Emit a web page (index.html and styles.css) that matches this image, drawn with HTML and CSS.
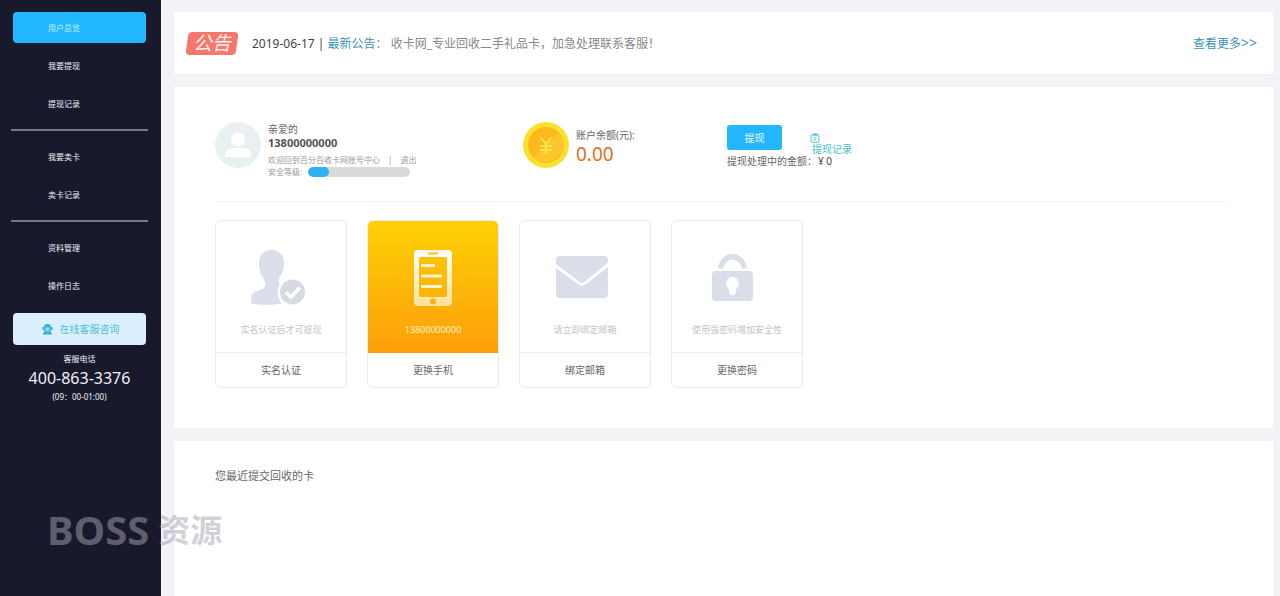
FILE: index.html
```html
<!DOCTYPE html>
<html lang="zh-CN">
<head>
<meta charset="utf-8">
<meta name="viewport" content="width=device-width, initial-scale=1">
<title>用户总览</title>
<link rel="stylesheet" href="styles.css">
</head>
<body>
<div class="layout">
  <aside class="sidebar">
    <nav class="menu">
      <a class="menu-item active" href="#">用户总览</a>
      <a class="menu-item" href="#">我要提现</a>
      <a class="menu-item" href="#">提现记录</a>
      <hr class="menu-line">
      <a class="menu-item" href="#">我要卖卡</a>
      <a class="menu-item" href="#">卖卡记录</a>
      <hr class="menu-line">
      <a class="menu-item" href="#">资料管理</a>
      <a class="menu-item" href="#">操作日志</a>
    </nav>
    <button class="service" type="button">
      <svg width="11" height="11" viewBox="0 0 11 11" fill="#35b5d6" aria-hidden="true">
        <path d="M2 3a3.500 3 0 0 1 7 0h1.500v3H9A3.500 2.500 0 0 1 2 6H.500V3z"/>
        <path d="M1 10.500C1 8.500 2 7.800 4 7.800l1.500 1L7 7.800c2 0 3 .7 3 2.700z"/>
        <path d="M3.300 3.600h4.400v1.600a2.200 1.800 0 0 1-4.400 0z" fill="#9bdcf0"/>
      </svg>
      <span>在线客服咨询</span>
    </button>
    <div class="contact">
      <div class="contact-label">客服电话</div>
      <div class="contact-number">400-863-3376</div>
      <div class="contact-label">(09：00-01:00)</div>
    </div>
  </aside>

  <main class="content">
    <section class="panel notice">
      <span class="notice-badge">公告</span>
      <p class="notice-text"><span class="notice-date">2019-06-17 |</span> <a href="#">最新公告</a>： 收卡网_专业回收二手礼品卡，加急处理联系客服！</p>
      <a class="more" href="#">查看更多<span class="arrows">&gt;&gt;</span></a>
    </section>

    <section class="panel overview">
      <div class="summary">
        <div class="user">
          <svg width="46" height="46" viewBox="0 0 46 46" aria-hidden="true">
            <circle cx="23" cy="23" r="23" fill="#e8f0f2"/>
            <circle cx="23" cy="17.500" r="7" fill="#fff"/>
            <path d="M10 35v-3c0-4 4-6 8-6h10c4 0 8 2 8 6v3z" fill="#fff"/>
          </svg>
          <div>
            <div class="hello">亲爱的</div>
            <div class="phone">13800000000</div>
            <div class="welcome"><span>欢迎回到百分百收卡网账号中心</span><span>|</span><a href="#">退出</a></div>
            <div class="safety"><span>安全等级:</span><span class="bar"><span class="bar-fill"></span></span></div>
          </div>
        </div>
        <div class="balance">
          <svg width="46" height="46" viewBox="0 0 46 46" aria-hidden="true">
            <circle cx="23" cy="23" r="23" fill="#fbe12f"/>
            <circle cx="23" cy="23" r="18" fill="#fbb91c"/>
            <path d="M10.300 35.700A18 18 0 0 0 35.700 10.300z" fill="#fdc52e"/>
            <path d="M17.500 15l5.500 7 5.500-7M23 22v10M17 24h12M17 28h12" fill="none" stroke="#fde34b" stroke-width="2"/>
          </svg>
          <div>
            <div class="balance-label">账户余额(元):</div>
            <div class="balance-value">0.00</div>
          </div>
        </div>
        <div class="withdraw">
          <div class="withdraw-row">
            <button class="withdraw-button" type="button">提现</button>
            <a class="record" href="#">
              <svg width="10" height="10" viewBox="0 0 10 11" fill="none" stroke="#47bfdf" aria-hidden="true">
                <rect x="0.700" y="1.700" width="8.600" height="8.600" rx="1.500"/>
                <path d="M3 1h4v2H3zM3 5.500h4M3 7.700h3"/>
              </svg>
              <span>提现记录</span>
            </a>
          </div>
          <div class="pending">提现处理中的金额：<span>¥ 0</span></div>
        </div>
      </div>

      <div class="cards">
        <a class="card" href="#">
          <span class="card-top">
            <svg width="62" height="58" viewBox="0 0 62 58" fill="#dadeea" aria-hidden="true">
              <path d="M21.500 1C29 1 34 6 34 14c0 7-2 11-4.500 14.500-1 2-.5 5 .5 7.500-3 6-2 13 1.500 18.500-8 2-22 1.500-30.500 0 0-10 2-11 8-13 5-2 6-3 6-7.500 0-3-2-5-3.500-8C9.500 22 9 18 9 14 9 6 14 1 21.500 1z"/>
              <circle cx="42.500" cy="43" r="15" fill="#fff"/>
              <circle cx="42.500" cy="43" r="12.500" fill="#d5dae3"/>
              <path d="M36 43.500l5 4.500 9-9.500" fill="none" stroke="#fff" stroke-width="3.500"/>
            </svg>
            <span class="card-note">实名认证后才可提现</span>
          </span>
          <span class="card-title">实名认证</span>
        </a>
        <a class="card highlight" href="#">
          <span class="card-top">
            <svg width="40" height="58" viewBox="0 0 40 58" aria-hidden="true">
              <defs>
                <linearGradient id="phoneFill" x1="0" y1="0" x2="0" y2="1">
                  <stop offset="0" stop-color="#fff"/>
                  <stop offset="1" stop-color="#ffe097"/>
                </linearGradient>
              </defs>
              <path fill="url(#phoneFill)" fill-rule="evenodd" d="M5 1h30a4 4 0 0 1 4 4v48a4 4 0 0 1-4 4H5a4 4 0 0 1-4-4V5a4 4 0 0 1 4-4zM8 8a2 2 0 0 0-2 2v36a2 2 0 0 0 2 2h24a2 2 0 0 0 2-2V10a2 2 0 0 0-2-2zM15 3.500v2h10v-2zM20 49.500a3 3 0 1 0 0 6 3 3 0 0 0 0-6z"/>
              <path d="M8 16.500h14M8 27h21M8 37.500h21" stroke="#fff2cf" stroke-width="3"/>
            </svg>
            <span class="card-note">13800000000</span>
          </span>
          <span class="card-title">更换手机</span>
        </a>
        <a class="card" href="#">
          <span class="card-top">
            <svg width="58" height="58" viewBox="0 0 58 58" fill="#d9dee8" aria-hidden="true">
              <path d="M4 7h44a4 4 0 0 1 4 4v2.500L28.500 33q-2.500 2-5 0L0 15v-4a4 4 0 0 1 4-4z"/>
              <path d="M0 19l22.500 16.500q3.500 2.500 7 0L52 18v27a4 4 0 0 1-4 4H4a4 4 0 0 1-4-4z"/>
            </svg>
            <span class="card-note">请立即绑定邮箱</span>
          </span>
          <span class="card-title">绑定邮箱</span>
        </a>
        <a class="card" href="#">
          <span class="card-top">
            <svg width="50" height="58" viewBox="0 0 50 58" fill="#d9dee8" aria-hidden="true">
              <path d="M6 19C8 10 13 5 20.500 5S33 10 35 19l-4.500 1c-2-6-5-9.500-10-9.500S13 14 11 20z"/>
              <path fill-rule="evenodd" d="M4 22h33a4 4 0 0 1 4 4v22a4 4 0 0 1-4 4H4a4 4 0 0 1-4-4V26a4 4 0 0 1 4-4zM20.500 28a6.500 6.500 0 0 0-4 11.500l1 5q3 3.500 6 0l1-5A6.500 6.500 0 0 0 20.500 28z"/>
            </svg>
            <span class="card-note">使用强密码增加安全性</span>
          </span>
          <span class="card-title">更换密码</span>
        </a>
      </div>
    </section>

    <section class="panel recent">
      <h2 class="recent-title">您最近提交回收的卡</h2>
    </section>
  </main>
</div>
<div class="watermark"><span>BOSS</span><span class="watermark-cn">资源</span></div>
</body>
</html>
```

FILE: styles.css
```css
* { box-sizing: border-box; }
body {
  margin: 0;
  font-family: "Noto Sans", "Noto Sans CJK SC", sans-serif;
  font-size: 10px;
  line-height: 14px;
  color: #666;
  background: #f2f2f7;
}
a { color: inherit; text-decoration: none; }
button { border: 0; padding: 0; font: inherit; cursor: pointer; }
svg { display: block; flex: none; }

.layout { display: flex; min-height: 100vh; }

.sidebar {
  flex: none;
  width: 161px;
  padding: 12px 15px 12px 13px;
  background: #19192e;
  color: #f0f0f5;
}
.menu { display: flex; flex-direction: column; gap: 7px; }
.menu-item {
  padding-left: 35px;
  border-radius: 4px;
  font-size: 8px;
  line-height: 31px;
}
.menu-item.active { background: #23b7ff; color: #c9f1ff; }
.menu-line {
  width: auto;
  height: 2px;
  margin: 3px -2px;
  border: 0;
  background: #77778a;
}
.service {
  display: flex;
  align-items: center;
  justify-content: center;
  gap: 7px;
  width: 100%;
  height: 32px;
  margin-top: 12px;
  padding-left: 2px;
  border-radius: 4px;
  background: #dbefff;
  color: #4fc0cb;
}
.contact { margin-top: 7px; text-align: center; }
.contact-label { font-size: 8px; line-height: 14px; }
.contact-number { font-size: 16px; line-height: 24px; }

.content {
  flex: 1;
  display: flex;
  flex-direction: column;
  gap: 13px;
  min-width: 0;
  padding: 12px 7px 0 13px;
}
.panel { background: #fff; }

.notice {
  display: flex;
  align-items: center;
  gap: 14px;
  padding: 19px 16px 19px 12px;
  font-size: 12px;
  line-height: 23px;
}
.notice-badge {
  position: relative;
  z-index: 0;
  width: 52px;
  color: #fff1e8;
  font-size: 19px;
  font-style: italic;
  text-align: center;
}
.notice-badge::before {
  content: "";
  position: absolute;
  z-index: -1;
  inset: 0 1px;
  border-radius: 4px;
  background: #f6776e;
  transform: skewX(-8deg);
}
.notice-text { flex: 1; margin: 0; color: #888; }
.notice-text a, .more { color: #3a93b8; }
.notice-date { color: #444; }
.arrows { font-size: 14px; }

.overview { padding: 35px 44px 40px 41px; }
.summary {
  display: grid;
  grid-template-columns: 308px 204px 1fr;
  padding-bottom: 24px;
  border-bottom: 1px solid #f3f3f5;
}
.user, .balance { display: flex; gap: 7px; }
.phone { color: #4d535c; font-size: 11px; font-weight: 700; }
.welcome {
  display: flex;
  gap: 8px;
  margin-top: 4px;
  color: #999;
  font-size: 8px;
  line-height: 12px;
}
.safety {
  display: flex;
  align-items: center;
  gap: 6px;
  color: #999;
  font-size: 8px;
  line-height: 11px;
}
.bar {
  width: 102px;
  height: 10px;
  border-radius: 5px;
  background: #dadada;
  overflow: hidden;
}
.bar-fill { display: block; width: 20%; height: 100%; border-radius: 5px; background: #2cb2f0; }

.balance > div { padding-top: 6px; }
.balance-value { color: #e0701f; font-size: 19px; line-height: 24px; }

.withdraw { padding-top: 3px; }
.withdraw-row { display: flex; gap: 28px; height: 30px; }
.withdraw-button {
  width: 55px;
  height: 25px;
  border-radius: 3px;
  background: #23b7ff;
  color: #e6f8ff;
}
.record { padding-top: 8px; color: #4bbfce; line-height: 12px; }
.record span { padding-left: 2px; }
.pending { line-height: 12px; }
.pending span { padding-left: 1px; color: #444; }

.cards { display: flex; flex-wrap: wrap; gap: 20px; padding-top: 18px; }
.card {
  width: 132px;
  border: 1px solid #ececf0;
  border-radius: 6px;
  overflow: hidden;
  text-align: center;
}
.card-top {
  display: flex;
  flex-direction: column;
  align-items: center;
  gap: 16px;
  padding: 28px 0 15px;
  border-bottom: 1px solid #ececf0;
}
.card-note { color: #c4c4c8; font-size: 9px; }
.card-title { display: block; line-height: 34px; }
.highlight .card-top {
  border-bottom-color: #fd9f0b;
  background: linear-gradient(#fdd006, #fd9f0b);
}
.highlight .card-note { color: #fff3c4; }

.recent { flex: 1; padding: 27px 41px; }
.recent-title { margin: 0; font-size: 11px; font-weight: 400; line-height: 16px; }

.watermark {
  position: absolute;
  left: 47px;
  top: 506px;
  display: flex;
  align-items: center;
  gap: 9px;
  color: rgba(163, 163, 176, 0.52);
  font-size: 40px;
  font-weight: 700;
  line-height: 48px;
  pointer-events: none;
}
.watermark-cn { font-size: 32px; }
```
